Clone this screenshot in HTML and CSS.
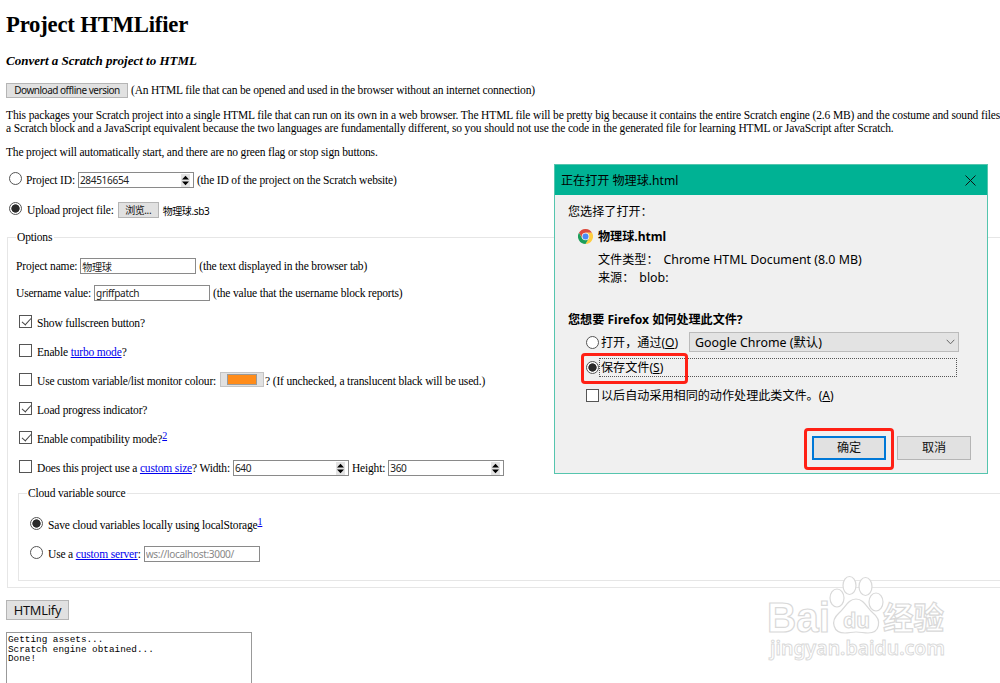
FILE: index.html
```html
<!DOCTYPE html>
<html lang="en">
<head>
    <meta charset="UTF-8">
    <title>Project HTMLifier</title>
    <link rel="stylesheet" href="styles.css">
</head>
<body>
    <main class="page">
        <h1>Project HTMLifier</h1>
        <h3>Convert a Scratch project to HTML</h3>

        <div class="row download">
            <button class="btn btn-download">Download offline version</button>
            <span class="t-download">(An HTML file that can be opened and used in the browser without an internet connection)</span>
        </div>

        <p class="intro">This packages your Scratch project into a single HTML file that can run on its own in a web browser. The HTML file will be pretty big because it contains the entire Scratch engine (2.6 MB) and the costume and sound files<br>a Scratch block and a JavaScript equivalent because the two languages are fundamentally different, so you should not use the code in the generated file for learning HTML or JavaScript after Scratch.</p>
        <p>The project will automatically start, and there are no green flag or stop sign buttons.</p>

        <div class="row source-id">
            <input type="radio" name="source">
            <span>Project ID:</span>
            <span class="number">
                <input type="text" value="284516654">
                <svg class="spin" viewBox="0 0 9 13"><path d="M1 5.500 4.500 1.800l3.500 3.700zM1 7.500l3.500 3.700 3.500-3.700z"/></svg>
            </span>
            <span>(the ID of the project on the Scratch website)</span>
        </div>
        <div class="row source-file">
            <input type="radio" name="source" checked>
            <span>Upload project file:</span>
            <button class="btn btn-browse">浏览...</button>
            <span class="file-name">物理球.sb3</span>
        </div>

        <fieldset class="options">
            <legend>Options</legend>
            <div class="row first">
                <span>Project name:</span>
                <input class="field" type="text" value="物理球">
                <span>(the text displayed in the browser tab)</span>
            </div>
            <div class="row username">
                <span>Username value:</span>
                <input class="field" type="text" value="griffpatch">
                <span>(the value that the username block reports)</span>
            </div>
            <div class="row fullscreen">
                <input type="checkbox" checked>
                <span>Show fullscreen button?</span>
            </div>
            <div class="row">
                <input type="checkbox">
                <span>Enable <a href="#">turbo mode</a>?</span>
            </div>
            <div class="row">
                <input type="checkbox">
                <span>Use custom variable/list monitor colour:</span>
                <span class="colour"><span class="swatch"></span></span>
                <span class="after-colour">? (If unchecked, a translucent black will be used.)</span>
            </div>
            <div class="row">
                <input type="checkbox" checked>
                <span>Load progress indicator?</span>
            </div>
            <div class="row">
                <input type="checkbox" checked>
                <span>Enable compatibility mode?<a class="note" href="#">2</a></span>
            </div>
            <div class="row">
                <input type="checkbox">
                <span>Does this project use a <a href="#">custom size</a>? Width:</span>
                <span class="number">
                    <input type="text" value="640">
                    <svg class="spin" viewBox="0 0 9 13"><path d="M1 5.500 4.500 1.800l3.500 3.700zM1 7.500l3.500 3.700 3.500-3.700z"/></svg>
                </span>
                <span>Height:</span>
                <span class="number">
                    <input type="text" value="360">
                    <svg class="spin" viewBox="0 0 9 13"><path d="M1 5.500 4.500 1.800l3.500 3.700zM1 7.500l3.500 3.700 3.500-3.700z"/></svg>
                </span>
            </div>

            <fieldset class="cloud">
                <legend>Cloud variable source</legend>
                <div class="row first">
                    <input type="radio" name="cloud" checked>
                    <span>Save cloud variables locally using localStorage<a class="note" href="#">1</a></span>
                </div>
                <div class="row">
                    <input type="radio" name="cloud">
                    <span>Use a <a href="#">custom server</a>:</span>
                    <input class="field" type="text" placeholder="ws://localhost:3000/">
                </div>
            </fieldset>
        </fieldset>

        <button class="btn btn-htmlify">HTMLify</button>
        <div class="log">Getting assets...<br>Scratch engine obtained...<br>Done!</div>
    </main>

    <!-- Download dialog -->
    <section class="dialog">
        <header class="title-bar">
            <span>正在打开 物理球.html</span>
            <svg class="close" viewBox="0 0 11 11"><path d="M.5.5l10 10M10.5.5l-10 10"/></svg>
        </header>
        <div class="dialog-body">
            <div class="line chosen">您选择了打开：</div>
            <div class="line file">
                <svg class="chrome" viewBox="0 0 48 48">
                    <path fill="#dd4b3e" d="M3.200 12A24 24 0 0 1 44.800 12H24L14 30z"/>
                    <path fill="#ffcd40" d="M44.800 12A24 24 0 0 1 24 48l10.400-18L24 12z"/>
                    <path fill="#1b9e5a" d="M24 48A24 24 0 0 1 3.200 12l10.400 18 20.800 0z"/>
                    <circle cx="24" cy="24" r="12" fill="#f1f1f1"/>
                    <circle cx="24" cy="24" r="9.500" fill="#4a8af4"/>
                </svg>
                <b>物理球.html</b>
            </div>
            <div class="line detail type"><span>文件类型：</span><span class="latin">Chrome HTML Document (8.0 MB)</span></div>
            <div class="line detail from"><span>来源：</span><span class="latin">blob:</span></div>
            <div class="line question"><b>您想要 Firefox 如何处理此文件?</b></div>
            <div class="line open-with">
                <input type="radio" name="action">
                <span>打开，通过(<u>O</u>)</span>
                <div class="select">
                    <span class="latin">Google Chrome (默认)</span>
                    <svg class="arrow" viewBox="0 0 9 6"><path d="M.7.8l3.800 4 3.800-4"/></svg>
                </div>
            </div>
            <div class="line save">
                <input type="radio" name="action" checked>
                <div class="focus">保存文件(<u>S</u>)</div>
            </div>
            <div class="line always">
                <input type="checkbox">
                <span>以后自动采用相同的动作处理此类文件。(<u>A</u>)</span>
            </div>
            <div class="actions">
                <button class="btn ok">确定</button>
                <button class="btn cancel">取消</button>
            </div>
        </div>
        <div class="mark mark-save"></div>
        <div class="mark mark-ok"></div>
    </section>

    <!-- Watermark -->
    <svg class="watermark" viewBox="0 0 190 105">
        <g class="outline">
            <text class="logo" x="5" y="62" textLength="63" lengthAdjust="spacingAndGlyphs">Bai</text>
            <ellipse cx="75" cy="28" rx="7" ry="9"/>
            <ellipse cx="87.500" cy="15.500" rx="6.500" ry="9"/>
            <ellipse cx="103.500" cy="16.500" rx="6.500" ry="9"/>
            <ellipse cx="114" cy="32" rx="7" ry="9"/>
            <path d="M94 29c-8 0-11 9-17 14-9 8-6 20 6 20 4 0 7-1 11-1s8 1 12 1c12 0 14-13 5-20-6-5-9-14-17-14z"/>
            <text class="du" x="81" y="58" textLength="27" lengthAdjust="spacingAndGlyphs">du</text>
            <text class="cjk" x="121" y="59" textLength="61" lengthAdjust="spacingAndGlyphs">经验</text>
            <text class="site" x="8" y="84.500" textLength="175" lengthAdjust="spacingAndGlyphs">jingyan.baidu.com</text>
        </g>
    </svg>
</body>
</html>
```
FILE: styles.css
```css
* {
    box-sizing: border-box;
}

body {
    margin: 0;
    height: 683px;
    position: relative;
    overflow: hidden;
    background: #fff;
    color: #000;
    font-family: "Liberation Serif", "Noto Sans CJK SC", serif;
    font-size: 11.5px;
    letter-spacing: -0.17px;
}

h1, h3, p {
    margin: 0;
}

a {
    color: #0000ee;
    text-underline-offset: 1px;
}

.page {
    width: 1000px;
    padding: 10px 0 0 6px;
    overflow: hidden;
    white-space: nowrap;
}

h1 {
    padding-top: 1px;
    font-size: 22.7px;
    line-height: 27px;
    letter-spacing: -0.2px;
}

h3 {
    margin-top: 13px;
    font-size: 13px;
    line-height: 20px;
    font-style: italic;
    letter-spacing: 0;
}

p {
    margin-top: 11px;
    line-height: 13px;
}

.intro {
    margin-top: 9px;
    letter-spacing: -0.135px;
}

/* Form rows */
.row {
    display: flex;
    align-items: center;
    gap: 3px;
    height: 20px;
    margin-top: 9px;
}

.source-id {
    margin-top: 11px;
}

.source-file {
    margin-top: 10px;
    gap: 4px;
}

input[type="radio"],
input[type="checkbox"] {
    appearance: none;
    flex: none;
    width: 13px;
    height: 13px;
    margin: 0 2px 4px 3px;
    border: 1px solid #555;
    background: #fff;
}

.source-id input[type="radio"],
.source-file input[type="radio"] {
    margin-right: 1px;
}

input[type="radio"] {
    border-radius: 50%;
}

input[type="radio"]:checked {
    background: radial-gradient(circle, #2b2b2b 3.8px, #fff 4.5px);
}

input[type="checkbox"]:checked::after {
    content: "";
    display: block;
    width: 4px;
    height: 8px;
    margin: 0 0 0 4px;
    border: solid #444;
    border-width: 0 1.3px 1.3px 0;
    transform: rotate(42deg);
}

.field,
.number {
    width: 116px;
    height: 16px;
    border: 1px solid #8a8a8a;
    background: #fff;
}

.field,
.number input {
    padding: 0 0 0 1px;
    font-family: "Noto Sans", "Noto Sans CJK SC", sans-serif;
    font-size: 10.1px;
    line-height: 14px;
    letter-spacing: -0.35px;
    color: #222;
}

.field::placeholder {
    color: #888;
}

.number {
    display: flex;
    justify-content: space-between;
    align-items: center;
    padding-right: 3px;
}

.number input {
    width: 90px;
    height: 14px;
    border: 0;
}

.spin {
    width: 9px;
    height: 13px;
    background: #e3e3e3;
}

.btn {
    padding: 0;
    border: 1px solid #b5b5b5;
    background: #e1e1e1;
    color: #111;
    font-family: "Noto Sans", "Noto Sans CJK SC", sans-serif;
    font-size: 10px;
}

.btn-download {
    width: 122px;
    height: 15px;
    line-height: 12px;
    letter-spacing: -0.48px;
}

.btn-browse {
    width: 41px;
    height: 16px;
    line-height: 13px;
    letter-spacing: -0.4px;
}

.file-name {
    font-family: "Noto Sans", "Noto Sans CJK SC", sans-serif;
    font-size: 10px;
    letter-spacing: -0.4px;
}

.btn-htmlify {
    display: block;
    width: 63px;
    height: 20px;
    margin-top: 12px;
    font-size: 12.8px;
    line-height: 18px;
    letter-spacing: -0.2px;
}

fieldset {
    min-width: 0;
    margin: 10px -20px 0 1px;
    padding: 0 0 6px 8px;
    border: 1px solid #e6e6e6;
}

legend {
    padding: 0 2px 0 1px;
    line-height: 14px;
}

.first {
    margin-top: 12px;
}

.username {
    margin-top: 7px;
}

.fullscreen {
    margin-top: 10px;
}

.cloud {
    margin: 8px 0 0 2px;
    padding-bottom: 16px;
}

.cloud .first {
    margin-top: 15px;
}

.note {
    font-size: 10px;
    vertical-align: 4px;
    line-height: 0;
}

.colour {
    width: 44px;
    height: 15px;
    padding: 1px 6px;
    margin-bottom: 3px;
    margin-left: 1px;
    border: 1px solid #c4c4c4;
    background: #e1e1e1;
}

.swatch {
    display: block;
    height: 11px;
    border: 1px solid #999;
    background: #ff8c1a;
}

.after-colour {
    margin-left: -2px;
}

.log {
    width: 246px;
    height: 60px;
    margin-top: 12px;
    padding: 2px 1px;
    border: 1px solid #999;
    font-family: "Liberation Mono", monospace;
    font-size: 9.35px;
    line-height: 9.7px;
    letter-spacing: 0;
}

/* Dialog */
.dialog {
    position: absolute;
    left: 554px;
    top: 164px;
    width: 434px;
    height: 310px;
    border: 1px solid #55c5ae;
    background: #f0f0f0;
    font-family: "Noto Sans", "Noto Sans CJK SC", sans-serif;
    font-size: 12.1px;
    letter-spacing: 0;
    white-space: nowrap;
}

.title-bar {
    display: flex;
    align-items: center;
    justify-content: space-between;
    height: 30px;
    padding: 0 11px 0 6px;
    background: #00b294;
}

.close {
    width: 11px;
    height: 11px;
    fill: none;
    stroke: #111;
}

.dialog-body {
    padding: 6px 16px 0 13px;
}

.latin {
    font-size: 12.4px;
}

.line {
    display: flex;
    align-items: center;
    height: 20px;
}

.file {
    margin-top: 5px;
    padding-left: 10px;
    gap: 5px;
}

.chrome {
    width: 15px;
    height: 15px;
}

.detail {
    height: 18px;
    padding-left: 30px;
}

.type {
    margin-top: 4px;
    gap: 5px;
}

.from {
    gap: 5px;
}

.question {
    margin-top: 23px;
}

.dialog input[type="radio"],
.dialog input[type="checkbox"] {
    margin: 0 2px 0 18px;
}

.open-with {
    margin-top: 3px;
}

.select {
    display: flex;
    align-items: center;
    justify-content: space-between;
    width: 270px;
    height: 20px;
    margin-left: auto;
    margin-right: 12px;
    padding: 0 3px 0 5px;
    border: 1px solid #bbb;
    background: #e3e3e3;
}

.arrow {
    width: 9px;
    height: 6px;
    fill: none;
    stroke: #666;
}

.save {
    margin-top: 5px;
}

.dialog .save input {
    margin-right: 0;
}

.focus {
    width: 358px;
    height: 19px;
    padding-left: 1px;
    border: 1px dotted #555;
    line-height: 17px;
}

.always {
    margin-top: 8px;
}

.actions {
    display: flex;
    justify-content: flex-end;
    gap: 11px;
    margin-top: 31px;
}

.actions .btn {
    width: 74px;
    height: 24px;
    font-size: 12.1px;
    line-height: 20px;
}

.actions .ok {
    border: 2px solid #0078d7;
}

.mark {
    position: absolute;
    border: 3px solid #ff2015;
    border-radius: 4px;
}

.mark-save {
    left: 26px;
    top: 188px;
    width: 107px;
    height: 31px;
}

.mark-ok {
    left: 249px;
    top: 263px;
    width: 90px;
    height: 42px;
}

/* Watermark */
.watermark {
    position: absolute;
    left: 762px;
    top: 570px;
    width: 190px;
    height: 105px;
    letter-spacing: 0;
}

.outline {
    fill: #fff;
    stroke: #d9d9d9;
    stroke-width: 1.2;
    font-family: "Noto Sans", sans-serif;
}

.logo {
    font-family: "Liberation Sans", sans-serif;
    font-size: 42px;
    font-weight: bold;
}

.du {
    font-size: 22px;
    font-weight: bold;
}

.cjk {
    font-family: "Noto Sans CJK SC", sans-serif;
    font-size: 31px;
    font-weight: bold;
}

.site {
    font-size: 19px;
    font-weight: 600;
    stroke-width: 0.9;
}
```
